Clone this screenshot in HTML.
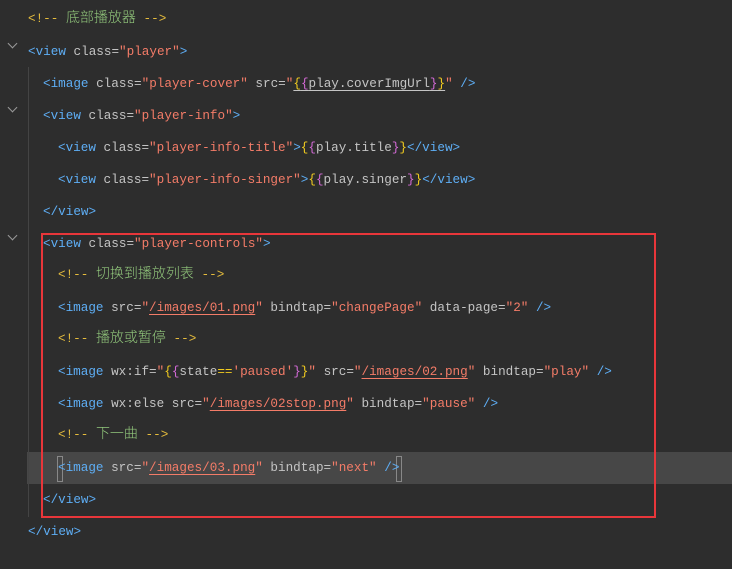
<!DOCTYPE html>
<html><head><meta charset="utf-8"><style>
html,body{margin:0;padding:0;background:#2d2d2d;width:732px;height:569px;overflow:hidden;position:relative}
.l{position:absolute;left:0;height:32px;line-height:32px;white-space:pre;font-family:"Liberation Mono","Noto Sans CJK SC",monospace;font-size:12.65px;color:#c4c4c4}
.t{color:#5eaef5}.a{color:#c4c4c4}.s{color:#f47c68}.c{color:#e6bd3d}.g{color:#92c87c}.z{font-family:"Noto Sans CJK SC",sans-serif;font-size:14px;font-weight:300;line-height:0}.y{color:#f2cc1f}.m{color:#d36ad6}.u{text-decoration:underline;text-underline-offset:3px}
.hl{position:absolute;left:27px;top:452px;width:705px;height:32px;background:#474747}
.box{position:absolute;left:41px;top:233px;width:611px;height:281px;border:2px solid #e8363a}
.guide{position:absolute;left:28px;top:67px;width:1px;height:450px;background:#444}
.fold{position:absolute;left:9px;width:6px;height:6px;border-right:1.5px solid #999;border-bottom:1.5px solid #999;transform:rotate(45deg)}
.cur{position:absolute;top:456px;width:4px;height:24px;border:1px solid #888}
</style></head><body>
<div class="hl"></div>
<div class="guide"></div>
<div class="fold" style="top:40px"></div>
<div class="fold" style="top:104px"></div>
<div class="fold" style="top:232px"></div>
<div class="cur" style="left:57px"></div>
<div class="cur" style="left:396px"></div>
<div class="l" style="top:3px;left:28px"><span class="c">&lt;!--</span><span class="g"> <span class="z">底部播放器</span> </span><span class="c">--&gt;</span></div>
<div class="l" style="top:36px;left:28px"><span class="t">&lt;view</span> class=<span class="s">"player"</span><span class="t">&gt;</span></div>
<div class="l" style="top:68px;left:43px"><span class="t">&lt;image</span> class=<span class="s">"player-cover"</span> src=<span class="s">"</span><span class="u"><span class="y">{</span><span class="m">{</span>play.coverImgUrl<span class="m">}</span><span class="y">}</span></span><span class="s">"</span> <span class="t">/&gt;</span></div>
<div class="l" style="top:100px;left:43px"><span class="t">&lt;view</span> class=<span class="s">"player-info"</span><span class="t">&gt;</span></div>
<div class="l" style="top:132px;left:58px"><span class="t">&lt;view</span> class=<span class="s">"player-info-title"</span><span class="t">&gt;</span><span class="y">{</span><span class="m">{</span>play.title<span class="m">}</span><span class="y">}</span><span class="t">&lt;/view&gt;</span></div>
<div class="l" style="top:164px;left:58px"><span class="t">&lt;view</span> class=<span class="s">"player-info-singer"</span><span class="t">&gt;</span><span class="y">{</span><span class="m">{</span>play.singer<span class="m">}</span><span class="y">}</span><span class="t">&lt;/view&gt;</span></div>
<div class="l" style="top:196px;left:43px"><span class="t">&lt;/view&gt;</span></div>
<div class="l" style="top:228px;left:43px"><span class="t">&lt;view</span> class=<span class="s">"player-controls"</span><span class="t">&gt;</span></div>
<div class="l" style="top:259px;left:58px"><span class="c">&lt;!--</span><span class="g"> <span class="z">切换到播放列表</span> </span><span class="c">--&gt;</span></div>
<div class="l" style="top:292px;left:58px"><span class="t">&lt;image</span> src=<span class="s">"<span class="u">/images/01.png</span>"</span> bindtap=<span class="s">"changePage"</span> data-page=<span class="s">"2"</span> <span class="t">/&gt;</span></div>
<div class="l" style="top:323px;left:58px"><span class="c">&lt;!--</span><span class="g"> <span class="z">播放或暂停</span> </span><span class="c">--&gt;</span></div>
<div class="l" style="top:356px;left:58px"><span class="t">&lt;image</span> wx:if=<span class="s">"</span><span class="y">{</span><span class="m">{</span>state<span class="y">==</span><span class="s">'paused'</span><span class="m">}</span><span class="y">}</span><span class="s">"</span> src=<span class="s">"<span class="u">/images/02.png</span>"</span> bindtap=<span class="s">"play"</span> <span class="t">/&gt;</span></div>
<div class="l" style="top:388px;left:58px"><span class="t">&lt;image</span> wx:else src=<span class="s">"<span class="u">/images/02stop.png</span>"</span> bindtap=<span class="s">"pause"</span> <span class="t">/&gt;</span></div>
<div class="l" style="top:419px;left:58px"><span class="c">&lt;!--</span><span class="g"> <span class="z">下一曲</span> </span><span class="c">--&gt;</span></div>
<div class="l" style="top:452px;left:58px"><span class="t">&lt;image</span> src=<span class="s">"<span class="u">/images/03.png</span>"</span> bindtap=<span class="s">"next"</span> <span class="t">/&gt;</span></div>
<div class="l" style="top:484px;left:43px"><span class="t">&lt;/view&gt;</span></div>
<div class="l" style="top:516px;left:28px"><span class="t">&lt;/view&gt;</span></div>
<div class="box"></div>
</body></html>
